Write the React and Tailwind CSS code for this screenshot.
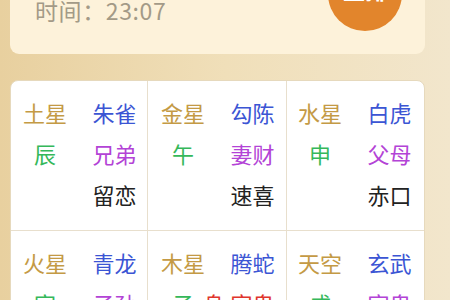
import React from 'react';

const C = {
  gold: 'text-[#c49a45]',
  blue: 'text-[#3b55d4]',
  green: 'text-[#35b85a]',
  purple: 'text-[#b343d6]',
  black: 'text-[#222222]',
  red: 'text-[#e0352c]',
};

// 九宫格数据：左列(星/地支)，右列(六神/六亲/小六壬)
const cells = [
  { a: ['土星', C.gold], b: ['朱雀', C.blue], c: ['辰', C.green], d: ['兄弟', C.purple], e: '留恋' },
  { a: ['金星', C.gold], b: ['勾陈', C.blue], c: ['午', C.green], d: ['妻财', C.purple], e: '速喜' },
  { a: ['水星', C.gold], b: ['白虎', C.blue], c: ['申', C.green], d: ['父母', C.purple], e: '赤口' },
  { a: ['火星', C.gold], b: ['青龙', C.blue], c: ['寅', C.green], d: ['子孙', C.purple], e: '' },
  { a: ['木星', C.gold], b: ['腾蛇', C.blue], c: ['子', C.green], d: ['官鬼', C.red], e: '', shen: true },
  { a: ['天空', C.gold], b: ['玄武', C.blue], c: ['戌', C.green], d: ['官鬼', C.purple], e: '' },
];

function Cell({ cell, i }) {
  const pl = i % 3 === 1 ? 'pl-[13px]' : i % 3 === 2 ? 'pl-[11px]' : 'pl-[12px]';
  const borders = [
    i % 3 !== 2 ? 'border-r border-[#e8dfcd]' : '',
    i < 3 ? 'border-b border-[#e8dfcd]' : '',
  ].join(' ');
  return (
    <div className={`h-[150px] pt-[10px] ${pl} ${borders}`}>
      <div className="flex h-[41px] items-center">
        <div className={`w-[44px] text-center ${cell.a[1]}`}>{cell.a[0]}</div>
        <div className={`ml-[25px] w-[45px] text-center ${cell.b[1]}`}>{cell.b[0]}</div>
      </div>
      <div className="flex h-[41px] items-center">
        <div className={`w-[44px] text-center ${cell.c[1]}`}>{cell.c[0]}</div>
        <div className={`relative ml-[25px] w-[45px] text-center ${cell.d[1]}`}>
          {cell.shen && <span className={`absolute right-full mr-[5px] ${C.red}`}>身</span>}
          {cell.d[0]}
        </div>
      </div>
      <div className="flex h-[41px] items-center">
        <div className="w-[44px]" />
        <div className={`ml-[25px] w-[45px] text-center ${C.black}`}>{cell.e}</div>
      </div>
    </div>
  );
}

export default function App() {
  return (
    <div
      className="relative h-[300px] w-[450px] overflow-hidden bg-gradient-to-r from-[#e8d09f] via-[#f0dfb9] to-[#f2e6cc]"
      style={{ fontFamily: '"Noto Sans CJK SC", "Noto Sans", sans-serif' }}
    >
      {/* 顶部信息卡 */}
      <div className="relative mx-[10px] -mt-[36px] flex h-[90px] w-[415px] items-end rounded-[9px] bg-[#fdf2da] pb-[32px] pl-[25px]">
        <span className="text-[23px] leading-none tracking-[0.6px] text-[#a39a87]">时间：23:07</span>
        <div className="absolute left-[318px] top-[-7px] flex h-[74px] w-[74px] items-center justify-center rounded-full bg-[#e2852c] pb-[9px] text-[22px] font-bold text-white">
          重排
        </div>
      </div>

      {/* 九宫格 */}
      <div className="mx-[10px] mt-[26px] w-[415px] overflow-hidden rounded-t-[8px] border border-[#e6d9bd] bg-white text-[22px] leading-none">
        <div className="grid grid-cols-[137px_139px_137px]">
          {cells.map((cell, i) => (
            <Cell key={i} cell={cell} i={i} />
          ))}
        </div>
      </div>
    </div>
  );
}
